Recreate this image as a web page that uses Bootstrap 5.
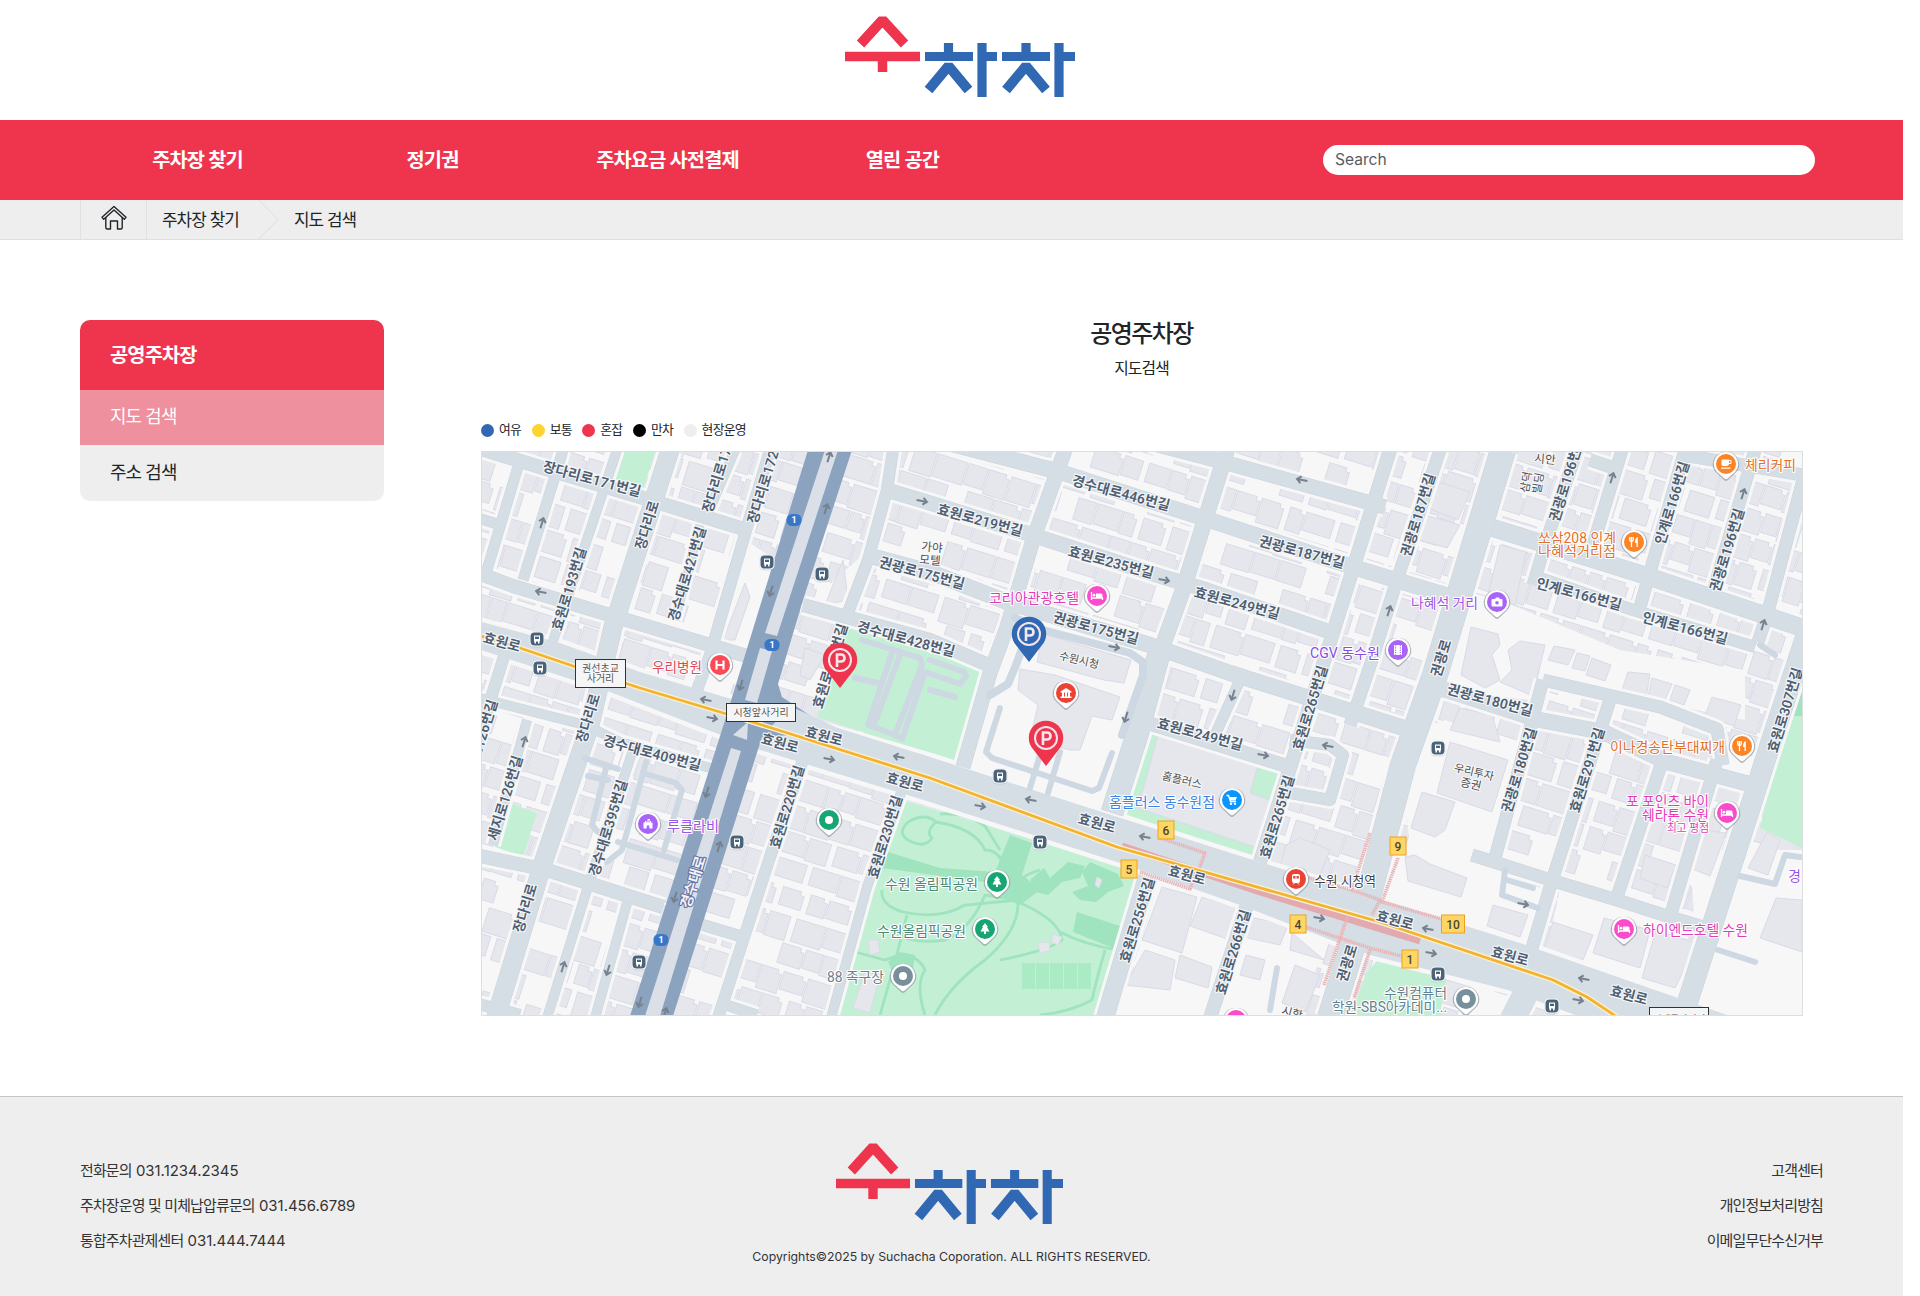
<!DOCTYPE html>
<html lang="ko">
<head>
<meta charset="utf-8">
<meta name="viewport" content="width=device-width, initial-scale=1">
<title>수차차 - 지도 검색</title>
<link href="https://cdn.jsdelivr.net/npm/bootstrap@5.3.0/dist/css/bootstrap.min.css" rel="stylesheet">
<style>
  :root { --sc-red:#ef344e; --sc-blue:#3068b3; --sc-gray:#eee; }
  body { width:1903px; font-family:Inter,"Noto Sans CJK KR",sans-serif; color:#212529; overflow:hidden; background:#fff; }
  .ko { letter-spacing:-.055em; }
  .site-top { height:120px; padding-top:16px; padding-left:17px; }
  .logo-mark { width:230px; height:81px; display:block; }
  .gnb { height:80px; background:var(--sc-red); padding:0 88px 0 80px; }
  .gnb .nav-link { width:235px; color:#fff; font-size:19.8px; font-weight:600; padding:0; text-align:center; line-height:28px; }
  .gnb .form-control { width:492px; height:30px; border:0; border-radius:15px; font-size:15.6px; padding:0 12px 1px; }
  .gnb .form-control::placeholder { color:#595c5f; }
  .crumbs { height:40px; background:var(--sc-gray); border-bottom:1px solid #dfdfdf; padding-left:80px; font-size:16.900px; }
  .crumb-home { width:67px; border-left:1px solid #e1e1e1; border-right:1px solid #e1e1e1; padding-bottom:4px; }
  .crumb-text { padding-top:2px; }
  .crumb-text:first-of-type { padding-left:15px; }
  .crumb-sep { width:20px; height:39px; margin-left:20px; margin-right:15px; }
  .content-area { padding:80px 100px 80px 80px; }
  .lnb { width:304px; border-radius:10px; overflow:hidden; margin-right:97px; }
  .lnb-head { height:70px; background:var(--sc-red); color:#fff; font-size:19.800px; font-weight:600; padding:1px 0 0 30px; }
  .lnb .list-group-item { height:55px; border:0; padding:0 30px; font-size:17.900px; background:var(--sc-gray); color:#212529; }
  .lnb .list-group-item.active { background:#ee909d; color:#fff; }
  .lnb .list-group-item:last-child { height:56px; }
  .main-title { font-size:24px; font-weight:500; line-height:28px; margin:0; letter-spacing:-.065em; padding-right:1px; }
  .main-sub { font-size:15.800px; line-height:22px; margin:10px 0 0; padding-right:1px; }
  .legend-row { height:20px; margin-top:40px; margin-bottom:11px; font-size:12.800px; gap:10.500px; }
  .dot { width:13px; height:13px; border-radius:50%; margin-right:5px; }
  .map-box { width:1322px; height:565px; border:1px solid #dcdfe0; overflow:hidden; }
  .map-box svg { display:block; width:1320px; height:563px; }
  .map-box text { font-family:Roboto,"Noto Sans CJK KR",sans-serif; paint-order:stroke; stroke-linejoin:round; }
  .foot { height:200px; border-top:1px solid #c5c5c5; background:var(--sc-gray); padding:0 80px; color:#333; font-size:14.950px; }
  .foot-col { width:400px; padding-top:57px; }
  .foot-col p { margin:0; line-height:35px; }
  .foot-mid { padding-top:46px; }
  .foot-mid .logo-mark { width:227px; margin-right:4px; }
  .copy { font-size:12.270px; line-height:18px; margin:24px 0 0; }
</style>
<script src="https://cdn.jsdelivr.net/npm/bootstrap@5.3.0/dist/js/bootstrap.bundle.min.js"></script>
</head>
<body>
<svg width="0" height="0" class="position-absolute">
  <defs>
    <symbol id="logo" viewBox="0 0 230 81" preserveAspectRatio="none">
      <g fill="none" stroke="#ef344e" stroke-width="10">
        <path d="M15.5 28 37.5 4 59.500 28" stroke-linejoin="bevel"/><path d="M0 40.500H75M37.500 45V56" stroke-width="9.500"/>
      </g>
      <g fill="none" stroke="#3068b3" stroke-width="10">
        <path d="M80 40.500H128M103.500 27V36M137 27V81M141 40.500H152" stroke-width="9.200"/><path d="M83.500 74 103.500 50 123.500 74" stroke-linejoin="bevel"/>
        <path d="M157 40.500H205M181 27V36M214 27V81M218 40.500H230" stroke-width="9.200"/><path d="M161 74 181 50 201 74" stroke-linejoin="bevel"/>
      </g>
    </symbol>
  </defs>
</svg>

<header class="site-top d-flex justify-content-center">
  <a href="#" aria-label="수차차"><svg class="logo-mark"><use href="#logo"/></svg></a>
</header>

<nav class="gnb d-flex align-items-center justify-content-between">
  <ul class="nav ko">
    <li class="nav-item"><a class="nav-link" href="#">주차장 찾기</a></li>
    <li class="nav-item"><a class="nav-link" href="#">정기권</a></li>
    <li class="nav-item"><a class="nav-link" href="#">주차요금 사전결제</a></li>
    <li class="nav-item"><a class="nav-link" href="#">열린 공간</a></li>
  </ul>
  <form role="search"><input class="form-control" type="search" placeholder="Search" aria-label="Search"></form>
</nav>

<div class="crumbs d-flex align-items-center ko">
  <a href="#" class="crumb-home h-100 d-flex align-items-center justify-content-center" aria-label="home">
    <svg width="26" height="26" viewBox="0 0 26 26" fill="none" stroke="#212529" stroke-width="1.400" stroke-linejoin="round" stroke-linecap="round">
      <path d="M13 1.500 1 12.300 2.700 14.200 13 5 23.300 14.200 25 12.300Z"/><path d="M4.800 12.800V22.500Q4.800 24 6.300 24H9.500V16H16.500V24H19.700Q21.200 24 21.200 22.500V12.800"/>
    </svg>
  </a>
  <span class="crumb-text">주차장 찾기</span>
  <svg class="crumb-sep" viewBox="0 0 20 39" fill="none" stroke="#dcdcdc"><path d="M0 0 19 19.500 0 39"/></svg>
  <span class="crumb-text">지도 검색</span>
</div>

<main class="content-area d-flex align-items-start">
  <aside class="lnb flex-shrink-0 ko">
    <div class="lnb-head d-flex align-items-center">공영주차장</div>
    <div class="list-group list-group-flush">
      <a href="#" class="list-group-item active d-flex align-items-center">지도 검색</a>
      <a href="#" class="list-group-item d-flex align-items-center">주소 검색</a>
    </div>
  </aside>
  <section>
    <div class="text-center ko">
      <h1 class="main-title">공영주차장</h1>
      <p class="main-sub">지도검색</p>
    </div>
    <div class="legend-row d-flex align-items-center ko">
      <span class="d-flex align-items-center"><i class="dot" style="background:#3068b3"></i>여유</span>
      <span class="d-flex align-items-center"><i class="dot" style="background:#fdd32d"></i>보통</span>
      <span class="d-flex align-items-center"><i class="dot" style="background:#ef344e"></i>혼잡</span>
      <span class="d-flex align-items-center"><i class="dot" style="background:#000"></i>만차</span>
      <span class="d-flex align-items-center"><i class="dot" style="background:#eee"></i>현장운영</span>
    </div>
    <div class="map-box"><svg id="map" viewBox="482 452 1320 563"></svg></div>
  </section>
</main>

<footer class="foot d-flex justify-content-between">
  <div class="foot-col">
    <p><span class="ko">전화문의</span> 031.1234.2345</p>
    <p><span class="ko">주차장운영 및 미체납압류문의</span> 031.456.6789</p>
    <p><span class="ko">통합주차관제센터</span> 031.444.7444</p>
  </div>
  <div class="foot-mid d-flex flex-column align-items-center">
    <svg class="logo-mark"><use href="#logo"/></svg>
    <p class="copy">Copyrights©2025 by Suchacha Coporation. ALL RIGHTS RESERVED.</p>
  </div>
  <div class="foot-col text-end ko">
    <p>고객센터</p><p>개인정보처리방침</p><p>이메일무단수신거부</p>
  </div>
</footer>

<script>
const out = [];
const poly = (p, fill, extra = '') => out.push(`<polygon points="${p}" fill="${fill}" ${extra}/>`);
const line = (p, w, c, extra = '') => out.push(`<polyline points="${p}" fill="none" stroke="${c}" stroke-width="${w}" stroke-linejoin="round" ${extra}/>`);
const LAND = '#f7f7f7', ROAD = '#d5dee5', BLD = '#e6e7ec', EDGE = '#dadae8', PARK = '#c3f0d5', PARK2 = '#9fe3bf', LANE = '#cdd8e2', HWY = '#8ba3bf';
const bld = p => poly(p, BLD, `stroke="${EDGE}"`);

/* ground and building lots, laid on the rotated street grid */
out.push(`<rect x="480" y="450" width="1324" height="568" fill="${LAND}"/>`);
let seed = 11;
const rnd = () => (seed = (seed * 16807) % 2147483647) / 2147483647;
out.push('<g transform="rotate(17.3 1142 733)">');
for (let y = 230; y < 1250; y += 27) {
  for (let x = 400; x < 1900;) {
    const w = 14 + rnd() * 17, h = 18 + rnd() * 7, n = rnd();
    if (n > .1) {
      const c = n > .55 ? 4 : 0;
      out.push(`<path d="M${x.toFixed(1)} ${y}h${(w - c).toFixed(1)}v${c}h${c}v${(h - c).toFixed(1)}h${(-w).toFixed(1)}z" fill="${BLD}" stroke="${EDGE}"/>`);
    }
    x += w + 1.5 + (rnd() > .7 ? 5 : 0);
  }
}
out.push('</g>');

/* open ground */
['745,540 800,575 770,690 708,680', '880,540 800,610 850,622', '1007,612 1152,652 1112,815 972,772', '1460,590 1500,600 1620,650 1745,670 1745,720 1600,690 1440,690',
 '1690,850 1802,850 1802,1015 1700,1015', '1390,850 1470,860 1545,890 1530,950 1385,905', '1560,890 1690,925 1680,1000 1545,955', '1160,875 1330,930 1300,1015 1120,1015',
 '1400,735 1445,720 1520,745 1485,870 1410,850', '1450,640 1470,610 1540,640 1530,700 1440,690'].forEach(p => poly(p, LAND));
['1471,627 1498,634 1500,645 1492,655 1500,680 1485,688 1461,675', '1520,641 1545,645 1533,696 1500,682 1512,670 1508,650', '1554,646 1575,650 1568,665 1548,660', '1577,653 1590,656 1585,671 1572,668', '1592,658 1611,665 1605,681 1586,675', '1628,672 1650,674 1646,698 1622,690', '1652,678 1672,684 1664,702 1648,696', '1675,685 1690,690 1684,705 1670,700', '1712,697 1741,705 1734,726 1705,716', '1450,742 1508,760 1492,812 1437,793', '1422,792 1455,802 1445,830 1435,837 1411,828',
 '1405,857 1415,855 1430,864 1467,878 1461,897 1408,881', '1493,905 1528,915 1520,937 1487,926', '1553,922 1593,935 1583,960 1544,948', '1604,918 1650,930 1640,968 1593,953', '1656,930 1697,943 1675,988 1642,978',
 '1703,830 1726,833 1710,876 1690,868', '1776,898 1802,900 1802,952 1760,938', '1767,832 1780,840 1768,875 1748,868', '1645,855 1676,865 1667,888 1640,878', '1162,887 1197,897 1182,953 1142,940', '1202,897 1237,908 1230,940 1190,926',
 '1145,950 1175,960 1170,990 1125,985', '1180,955 1212,967 1208,988 1175,978', '1250,917 1288,925 1280,945 1243,937', '1292,933 1324,960 1290,950', '1295,965 1320,975 1305,1012 1282,1003', '1246,955 1265,960 1260,980 1240,975',
 '1043,634 1131,660 1124,683 1104,680 1037,662', '1020,669 1055,675 1120,697 1112,720 1092,716 1080,750 1070,750 1030,740 1038,705 1018,690', '1286,845 1300,838 1330,850 1318,880 1280,868', '1500,545 1526,552 1515,605 1488,595',
 '1432,480 1470,492 1458,520 1428,508', '1425,515 1460,525 1447,548 1420,540', '1460,708 1492,715 1500,742 1450,730', '745,583 750,597 735,640 723,640', '843,560 848,600 825,605', '805,648 825,655 810,680 800,675'].forEach(bld);

/* parks */
['617,452 655,452 643,490 612,480', '847,627 990,672 960,764 817,717', '902,800 1143,873 1100,1015 835,1015', '1147,733 1283,767 1255,860 1122,813', '510,803 537,813 523,857 495,847',
 '1790,690 1802,690 1802,848 1760,828', '1380,957 1447,975 1440,1015 1352,1015 1365,975'].forEach(p => poly(p, PARK));
poly('1792,690 1802,690 1802,716 1786,716', PARK2);
bld('1160,728 1258,765 1250,793 1270,800 1255,847 1138,808');
poly('888,852 940,868 995,872 1010,835 1032,843 1022,875 1040,890 1020,905 1008,900 985,882 940,876 882,868', PARK2);
poly('1030,880 1044,868 1050,878 1068,862 1085,866 1080,878 1062,882 1048,895 1036,892', PARK2);
poly('1077,912 1126,928 1118,950 1073,932', PARK2);
poly('1090,862 1118,874 1124,886 1108,892 1096,902 1080,900 1072,892 1088,886 1082,872', PARK2);
['908,822Q895,835 912,842Q925,848 932,838Q925,832 936,822Q925,812 908,822', '936,822Q975,828 985,850Q1000,850 1004,868', '940,814Q965,812 985,826L1000,850', '882,890Q880,905 903,912Q940,920 965,905L1018,900', '907,915Q895,965 880,1015', '1018,900Q1020,930 985,960Q950,985 935,1015',
 '1018,902Q1060,920 1062,940Q1050,950 1000,960', '1018,900L985,895Q970,930 945,940Q910,945 895,932', '855,952L885,960Q915,948 925,970Q915,985 925,1015', '1060,932Q1085,945 1118,950', '1105,950Q1095,985 1092,1000Q1070,1012 1040,1015', '1040,870Q1010,878 1018,900'].forEach(d => out.push(`<path d="M${d}" fill="none" stroke="${PARK2}" stroke-width="2.800"/>`));
poly('888,962 900,952 915,955 912,975 895,978', PARK2);
for (let i = 0; i < 5; i++) out.push(`<rect x="${1022 + i * 14}" y="963" width="13" height="26" fill="#aaeac4"/>`);
['1053,934 1062,937 1058,945 1051,942', '1038,943 1049,942 1050,951 1040,953', '868,940 878,940 880,952 870,955', '865,972 880,975 870,1013 853,1008', '1097,877 1102,880 1099,888 1095,885'].forEach(bld);

/* streets: [width, points] */
const streets = [
 [13,'475,447 543,468 640,497 747,530'],[13,'475,572 513,586 623,619 750,657'],[10,'475,517 497,524'],[15,'940,441 1060,472 1200,517 1353,567 1455,598'],[14,'1150,443 1227,463 1385,507'],
 [14,'887,490 930,503 1023,532 1163,577 1207,590 1333,633'],[15,'867,555 930,572 1007,602 1150,645 1230,673 1410,730'],[13,'803,605 930,640 993,667'],[13,'1145,722 1290,767'],
 [17,'1493,528 1650,577 1803,628'],[11,'1537,577 1633,610 1755,647'],[12,'1533,585 1545,545 1577,450'],[15,'1440,688 1540,720 1603,732 1667,762 1753,785'],[12,'1543,680 1660,707 1717,729 1723,765'],
 [12,'1472,855 1557,882 1617,900 1670,917 1710,929'],[9,'475,697 585,725 620,742 710,768'],[13,'475,855 547,870 663,907'],[11,'475,1003 520,1015'],[11,'703,925 743,937'],[10,'720,1003 757,1015'],
 [10,'563,450 523,580'],[10,'520,460 487,570'],[9,'617,450 550,650'],[11,'505,653 478,740'],[18,'670,450 613,627 590,725 543,863 495,1020'],[9,'735,450 705,520'],[11,'770,450 747,527 710,655 697,690'],[8,'700,525 675,620'],
 [11,'893,450 887,490 868,560 847,615'],[14,'1065,450 1033,540 1007,627 990,673 963,767'],[15,'1227,450 1183,590 1160,653'],[22,'1160,650 1137,735 1112,813'],[13,'1390,450 1333,633 1310,705 1283,790 1260,862'],[10,'1240,680 1215,735'],
 [12,'1440,450 1397,580 1372,660 1350,725'],[25,'1503,450 1435,675 1403,765 1370,890 1330,1018'],[12,'1622,450 1593,545'],[12,'1685,450 1640,607'],[12,'1755,450 1712,595'],[12,'1803,480 1767,615 1758,642'],
 [20,'1808,630 1770,745 1743,830 1685,1010'],[12,'1543,680 1520,765 1495,858'],[12,'1610,700 1597,740 1550,887 1530,955'],[12,'1662,762 1617,897'],[12,'1717,760 1670,917'],[11,'808,745 770,857 718,1018'],[9,'902,790 867,887 831,1018'],
 [17,'1147,877 1105,1018'],[13,'1247,905 1210,1018'],[9,'633,750 590,880 547,1018'],[9,'627,903 595,1018'],[9,'527,720 493,845'],[12,'1590,460 1620,470'],[12,'1683,455 1803,475'],[24,'1525,995 1512,1020'],[11,'1290,740 1330,745 1343,755 1330,800 1285,792']];
const mainRoad = '475,620 560,643 640,672 735,700 930,757 1105,813 1253,860 1380,899 1520,943 1730,1016 1578,1016 1508,990 1370,955 1240,905 1120,863 930,802 760,750 700,727 610,692 475,648';
streets.forEach(s => line(s[1], s[0] + 7, LAND));
poly(mainRoad, LAND, `stroke="${LAND}" stroke-width="9"`);
streets.forEach(s => line(s[1], s[0] + 1, '#c9d3dc'));
streets.forEach(s => line(s[1], s[0], ROAD));
poly(mainRoad, ROAD);

/* lanes inside sites */
['1015,618 1043,630 1130,653 1143,662 1143,675 1122,735', '990,695 1008,684 1016,665 1027,635'].forEach(p => line(p, 8, LANE, 'stroke-linecap="round"'));
['1000,708 986,752 992,758 1092,791 1099,788 1112,753', '1040,755 1030,788', '1060,752 1048,793', '855,678 878,683', '862,640 920,658 922,665 895,735 868,725 893,650', '895,735 902,739 925,672 960,684 966,676 964,672 930,660', '930,690 955,697', '900,655 875,722',
 '585,758 618,769', '588,776 608,780', '606,768 592,825 598,832 603,835', '646,762 622,850 607,862', '643,773 676,783 682,790 664,850', '618,842 677,860', '1505,870 1502,895 1538,908', '1507,880 1533,888', '1718,950 1755,962', '1740,876 1775,884 1785,855 1800,857', '1760,645 1775,655', '1277,968 1270,1010'].forEach(p => line(p, 6, LANE, 'stroke-linecap="round"'));

/* highway */
poly('808,450 852,450 803,600 778,684 782,697 835,732 762,737 673,1016 630,1016 722,730', HWY);
['825,450 838,450 777,636 765,633', '760,648 772,651 757,703 745,700', '731,748 741,751 660,1016 645,1016', '733,735 748,722 747,740'].forEach(p => poly(p, '#dbe0e8'));
poly('790,706 838,728 930,757 900,765 770,728', ROAD);

/* underground passages and subway line */
line('1122,846 1260,892 1420,941', 7, '#e2a9ae');
['1160,838 1205,853 1198,872', '1140,872 1190,889 1195,875', '1300,925 1370,948 1405,957', '1398,858 1382,902 1445,920', '1370,833 1352,890 1300,875', '1348,915 1324,985', '1370,950 1354,998', '1352,890 1380,900 1372,915'].forEach(p => line(p, 3.5, '#e9b3b6', 'stroke-dasharray="1.5 .7"'));
const metro = '475,634 520,648 576,667 640,688 720,712 778,730 930,778 1117,847 1380,922 1553,980 1587,997 1617,1017';
line(metro, 5.4, '#faf1d8'); line(metro, 2.8, '#f3b32c');

/* direction arrows: [x, y, heading] */
const U = -73, D = 107, L = 197, R = 17;
[[542,523,U],[541,592,L],[829,457,U],[826,509,U],[771,591,D],[741,685,D],[706,700,L],[712,718,R],[922,501,R],[1164,580,R],[1114,647,R],[1233,695,D],[1126,717,D],[1302,480,L],[1612,478,U],[1743,494,U],[1389,611,U],[1763,625,U],
 [524,742,U],[707,792,D],[719,847,U],[675,897,D],[829,759,R],[899,757,L],[563,967,U],[608,970,D],[640,1002,D],[665,1013,U],[980,806,R],[1031,800,L],[1145,837,L],[1263,755,R],[1328,746,L],[1319,918,R],[1523,904,R],[1428,929,L],[1431,953,R],[1584,979,L],[1578,1000,R]]
 .forEach(a => out.push(`<path transform="translate(${a[0]} ${a[1]}) rotate(${a[2] === R || a[2] === L ? a[2] - 6 : a[2]})" d="M-5.500 0H4M1-3.500 5 0 1 3.500" fill="none" stroke="#76818d" stroke-width="2"/>`));

/* street names: [text, x, y, angle, length] */
const txt = (t, x, y, a, len, size, fill, weight = 400, anchor = 'middle', halo = '#f7f8fa') =>
  out.push(`<text transform="translate(${x} ${y}) rotate(${a})" dy=".36em" text-anchor="${anchor}" font-size="${size}" font-weight="${weight}" fill="${fill}" stroke="${halo}" stroke-width="2.200" ${len ? `textLength="${len}" lengthAdjust="spacingAndGlyphs"` : ''}>${t}</text>`);
[['장다리로171번길',592,479,R,101],['장다리로',647,525,U,50],['경수대로421번길',687,574,U,98],['효원로193번길',569,589,U,86],['효원로',502,642,R,38],['장다리로',588,718,U,50],['세지로126번길',505,798,U,88],['경수대로409번길',652,753,R,101],['경수대로395번길',608,828,U,100],
 ['장다리로',525,908,U,50],['효원로',780,743,R,38],['효원로',824,736,R,38],['효원로',905,782,R,38],['효원로220번길',787,807,U,86],['효원로230번길',885,837,U,86],['효원로210번길',830,666,U,88],['경수대로428번길',906,639,R,101],['권광로175번길',922,573,R,88],['효원로219번길',980,520,R,88],
 ['경수대로446번길',1121,493,R,101],['효원로235번길',1111,562,R,88],['효원로249번길',1237,603,R,88],['권광로187번길',1302,552,R,88],['권광로175번길',1096,628,R,88],['효원로249번길',1200,734,R,88],['효원로265번길',1310,708,U,88],['효원로265번길',1277,817,U,86],['권광로187번길',1418,515,U,86],
 ['인계로166번길',1672,503,U,86],['권광로196번길',1727,550,U,86],['인계로166번길',1579,594,R,88],['인계로166번길',1685,628,R,88],['권광로',1441,658,U,38],['권광로180번길',1490,700,R,88],['효원로307번길',1785,710,U,88],['권광로180번길',1519,770,U,88],['효원로291번길',1587,770,U,88],['효원로266번길',1233,952,U,88],
 ['효원로256번길',1137,920,U,88],['효원로',1097,823,R,38],['효원로',1187,875,R,38],['효원로',1395,920,R,38],['효원로',1510,956,R,38],['효원로',1629,995,R,38],['권광로',1347,963,U,38],['세지로126번길',480,742,U,88]]
 .forEach(l => txt(l[0], l[1], l[2], l[3] === R ? 15 : l[3], l[4], 14, '#4f5f72', 600));
txt('장다리로171번길', 707, 512, U, 101, 14, '#4f5f72', 600, 'start');
txt('장다리로172번길', 752, 523, U, 101, 14, '#4f5f72', 600, 'start');
txt('권광로196번길', 1554, 521, U, 88, 14, '#4f5f72', 600, 'start');
txt('경수대로', 693, 882, U, 54, 14.5, '#f2f4fa', 700, 'middle', '#66719f');
[['가야',932,547,5],['모텔',930,560,5],['수원시청',1079,660,13],['홈플러스',1182,780,13],['우리투자',1474,772,13],['증권',1471,784,13],['시안',1545,459,5],['삼덕',1526,482,-80],['빌딩',1538,483,-80],['시학',1292,1013,15]].forEach(l => txt(l[0], l[1], l[2], l[3], 0, l[0].length > 3 ? 11 : 11.5, '#4d4d4d'));

/* junction name plates */
[[575.5,659.5,50,28,['권선초교','사거리']],[726.5,703.500,69,18,['시청앞사거리']],[1649.5,1007.500,59,16,['인계동사거리']]].forEach((b, k) => {
  out.push(`<rect x="${b[0]}" y="${b[1]}" width="${b[2]}" height="${b[3]}" fill="#f4f5f7" stroke="#333"/>`);
  b[4].forEach((t, i) => txt(t, b[0] + b[2] / 2, b[1] + (k === 2 ? 11 : 9) + i * 10, 0, 0, k === 2 ? 9.500 : 10, '#555'));
});

/* route shields, bus stops, exits */
[[794,520],[772,645],[661,940]].forEach(p => out.push(`<rect x="${p[0] - 7.5}" y="${p[1] - 6}" width="15" height="12" rx="5.500" fill="#3a76c8"/><text x="${p[0]}" y="${p[1] + 3.300}" font-size="9" font-weight="700" text-anchor="middle" fill="#fff">1</text>`));
[[767,562],[822,574],[537,639],[540,668],[737,842],[639,962],[1000,776],[1040,842],[1438,748],[1438,974],[1552,1006]].forEach(p => out.push(`<g transform="translate(${p})"><rect x="-7.500" y="-7.500" width="15" height="15.800" rx="4.500" fill="#9aa3ad" opacity=".5"/><rect x="-7.500" y="-7.500" width="15" height="15" rx="4.500" fill="#fff"/><rect x="-6.500" y="-6.500" width="13" height="13" rx="4" fill="#4a6379"/><path d="M-3-3.500H3V2.500H-3ZM-2.500 2.500V4.500H-1V2.500M1 2.500V4.500H2.500V2.500" fill="#fff"/><path d="M-2-2.300H2V0H-2Z" fill="#4a6379"/></g>`));
[[1166,830,6],[1129,869,5],[1298,924,4],[1398,846,9],[1453,924,10],[1410,959,1]].forEach(p => { const w = p[2] > 9 ? 23 : 16;
  out.push(`<rect x="${p[0] - w / 2}" y="${p[1] - 9}" width="${w}" height="18" fill="#fdd663" stroke="#f29f1f"/><text x="${p[0]}" y="${p[1] + 4.500}" font-size="12" font-weight="500" text-anchor="middle" fill="#4a4636">${p[2]}</text>`); });

/* places: [x, y, colour, icon] */
const icons = {
  h:'<path d="M-3.500-4.500V4.500M3.500-4.500V4.500M-3.500 0H3.500" stroke="#fff" stroke-width="2.200" fill="none"/>',
  bed:'<path d="M-5.500-4V4M-5.500 2H5.500V4" stroke="#fff" stroke-width="1.300" fill="none"/><path d="M-1-2.500H4Q5.500-2.500 5.500-1V2H-1Z" fill="#fff"/><circle cx="-3" cy="-.800" r="1.400" fill="#fff"/>',
  hall:'<path d="M-5.500-1.500 0-5 5.500-1.500V-.500H-5.500ZM-5.500 3.500H5.500V5H-5.500ZM-4-.500H-2V3.500H-4ZM2-.500H4V3.500H2ZM-1-.500H1V3.500H-1Z" fill="#fff"/>',
  cam:'<rect x="-5.500" y="-3" width="11" height="7.500" rx="1" fill="#fff"/><path d="M-2-3-1-4.500H2L3-3Z" fill="#fff"/><circle cx="0" cy=".700" r="1.800" fill="#a864f7"/>',
  film:'<rect x="-4" y="-5" width="8" height="10" fill="#fff"/><path d="M-2.300-5V5M2.300-5V5" stroke="#a864f7" stroke-width="1" stroke-dasharray="1.300 1"/>',
  fork:'<path d="M-4.200-5V-2Q-4.200-.500-2.500-.500T-.800-2V-5M-2.500-5V5" stroke="#fff" stroke-width="1.300" fill="none"/><path d="M3.800 5H2.500V1H1Q.800-4 3.800-5Z" fill="#fff"/>',
  cup:'<path d="M-4.500-4.500H3V0Q3 2-1 2T-4.500 0ZM-5 3.500H4.500V4.700H-5Z" fill="#fff"/><path d="M3-3.500H5V-.500H3" fill="none" stroke="#fff"/>',
  fort:'<path d="M-4.500-1.500H-3V-3H-1.500V-1.500H-.500V-5H2V-3.500H.500V-1.500H1.500V-3H3V-1.500H4.500V4.500H1.300V1.500H-1.300V4.500H-4.500Z" fill="#fff"/>',
  dot:'<circle r="4" fill="#fff"/>',
  tree:'<path d="M0-6 3-2H2L4.500 2.500H1V5H-1V2.500H-4.500L-2-2H-3Z" fill="#fff"/>',
  cart:'<path d="M-5.500-4.500H-3.500L-1.500 1.500H4" stroke="#fff" stroke-width="1.400" fill="none"/><path d="M-3-3H5L3.500 .500H-2Z" fill="#fff"/><circle cx="-1" cy="3.800" r="1.200" fill="#fff"/><circle cx="3" cy="3.800" r="1.200" fill="#fff"/>',
  train:'<rect x="-4" y="-5" width="8" height="9" rx="2" fill="#fff"/><path d="M-2.800-3H-.500V-.500H-2.800ZM.500-3H2.800V-.500H.500Z" fill="#ea4335"/><path d="M-3 5.500-1.500 4M3 5.500 1.500 4" stroke="#fff"/>'
};
const PINK = '#f94bcb', PUR = '#a864f7', ORG = '#fb8426', GRN = '#17a673', GRY = '#78909c';
[[720,665,'#fa4a55','h'],[1097,596,PINK,'bed'],[1066,693,'#ea4335','hall'],[1497,602,PUR,'cam'],[1398,650,PUR,'film'],[1634,542,ORG,'fork'],[1726,464,ORG,'cup'],[648,824,PUR,'fort'],[829,820,GRN,'dot'],[903,976,GRY,'dot'],[997,882,GRN,'tree'],[985,929,GRN,'tree'],
 [1232,800,'#0a96ff','cart'],[1296,879,'#ea4335','train'],[1742,746,ORG,'fork'],[1727,813,PINK,'bed'],[1624,929,PINK,'bed'],[1466,999,GRY,'dot'],[1236,1020,PINK,'bed']].forEach(p =>
  out.push(`<g transform="translate(${p[0]} ${p[1]})"><path d="M0-12A12.300 12.300 0 0 1 9.500 9L2 16Q0 18-2 16L-9.500 9A12.300 12.300 0 0 1 0-12Z" fill="#8d939c" opacity=".65"/><path d="M0-12A12 12 0 0 1 9 8L2 14.300Q0 16-2 14.300L-9 8A12 12 0 0 1 0-12Z" fill="#fff"/><circle r="10" fill="${p[2]}"/>${icons[p[3]]}</g>`));
[['우리병원',702,667,'end','#dd4b5a',50],['코리아관광호텔',1079,598,'end','#e23cba',90],['나혜석 거리',1478,603,'end','#9a55e8',67],['CGV 동수원',1380,653,'end','#8a4be0',70],['쏘삼208 인계',1616,538,'end','#e0702a',78],['나혜석거리점',1616,551,'end','#e0702a',78],['체리커피',1745,465,'start','#e0702a',51],
 ['루클라비',667,826,'start','#9a55e8',52],['88 족구장',884,977,'end','#6b7f8c',57],['수원 올림픽공원',978,884,'end','#4c8a75',93],['수원올림픽공원',966,931,'end','#4c8a75',89],['홈플러스 동수원점',1215,802,'end','#3d83e6',106],['수원 시청역',1314,881,'start','#3f3f46',62],
 ['이나경송탄부대찌개',1725,747,'end','#e0702a',115],['포 포인츠 바이',1709,801,'end','#e23cba',83],['쉐라톤 수원',1709,815,'end','#e23cba',67],['하이엔드호텔 수원',1643,930,'start','#e23cba',105],['경',1788,876,'start','#9a55e8',0],['수원컴퓨터',1447,993,'end','#647f8c',63],['학원-SBS아카데미...',1447,1007,'end','#647f8c',115]]
 .forEach(l => txt(l[0], l[1], l[2], 0, l[5], 14, l[4], 400, l[3], '#fff'));
txt('최고 평점', 1709, 828, 0, 42, 11.5, '#e23cba', 400, 'end', '#fff');

/* parking lots: [x, y, state colour] */
[[840,660,'#ef344e'],[1029,634,'#3068b3'],[1046,738,'#ef344e']].forEach(p =>
  out.push(`<g transform="translate(${p[0]} ${p[1]})"><path d="M0 28 12.500 11.700A17.200 17.200 0 1 0-12.500 11.700Z" fill="${p[2]}"/><circle r="11" fill="none" stroke="#f3e4ea" stroke-width="2"/><path d="M-3 7V-5.500H1Q4.500-5.500 4.500-2T1 1.500H-3" fill="none" stroke="#f6e9ee" stroke-width="2.600"/></g>`));

document.getElementById('map').innerHTML = out.join('');
</script>
</body>
</html>
